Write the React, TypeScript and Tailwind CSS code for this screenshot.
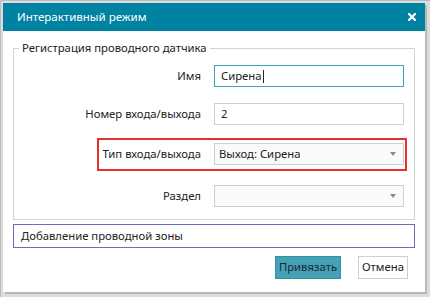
const font = { fontFamily: '"Noto Sans", "Open Sans", sans-serif' };

const Caret = () => (
  <svg width="6" height="4" viewBox="0 0 6 4" className="absolute right-[7px] top-1/2 -translate-y-1/2">
    <path d="M0 0 L6 0 L3 4 Z" fill="#8a8a8a" />
  </svg>
);

function Field({ children, focused }: { children?: React.ReactNode; focused?: boolean }) {
  return (
    <div
      className={`relative w-[190px] h-[22px] bg-white flex items-center px-[6px] text-[11.3px] text-[#222] border ${
        focused ? 'border-[#3fa5bd]' : 'border-[#cfcfcf]'
      }`}
    >
      {children}
    </div>
  );
}

function SelectBox({ value }: { value?: string }) {
  return (
    <div className="relative w-[190px] h-[22px] bg-[#fafafa] flex items-center px-[4px] text-[11.3px] text-[#222] border border-[#cfcfcf]">
      {value}
      <Caret />
    </div>
  );
}

export default function App() {
  return (
    <div className="w-[430px] h-[297px] bg-[#dcdcdc] border-l border-t border-[#bdbdbd] pt-[2px] pl-[2px]" style={font}>
      <div className="w-[422px] h-[289px] bg-white flex flex-col shadow-[2px_2px_0_#b8b8b8]">
        <div className="h-[28px] bg-[#0083a2] flex items-center justify-between pl-[14px] pr-[9px] text-white text-[11.5px]">
          <span>Интерактивный режим</span>
          <svg width="8" height="8" viewBox="0 0 8 8">
            <path d="M1 1 L7 7 M7 1 L1 7" stroke="#fff" strokeWidth="2.2" strokeLinecap="square" />
          </svg>
        </div>

        <div className="flex flex-col px-[10px] pt-[10px]">
          <fieldset className="border border-[#d4d4d4] pr-[10px] pb-[12px] pt-[10px]">
            <legend className="ml-[5px] px-[3px] text-[11.3px] text-[#222] leading-[14px]">
              Регистрация проводного датчика
            </legend>
            <div className="flex flex-col items-end">
              <div className="flex items-center">
                <span className="text-[11.3px] text-[#222]">Имя</span>
                <div className="ml-[13px]">
                  <Field focused>
                    Сирена<span className="ml-[1px] w-px h-[13px] bg-[#222]" />
                  </Field>
                </div>
              </div>
              <div className="flex items-center mt-[16px]">
                <span className="text-[11.3px] text-[#222]">Номер входа/выхода</span>
                <div className="ml-[13px]">
                  <Field>2</Field>
                </div>
              </div>
              <div className="flex items-center mt-[13px] -mr-[3px] border-2 border-[#e8302c] pl-[3px] pr-[1px] pt-[3px] pb-[4px]">
                <span className="text-[11.3px] text-[#222]">Тип входа/выхода</span>
                <div className="ml-[13px]">
                  <SelectBox value="Выход: Сирена" />
                </div>
              </div>
              <div className="flex items-center mt-[14px]">
                <span className="text-[11.3px] text-[#222]">Раздел</span>
                <div className="ml-[13px]">
                  <SelectBox />
                </div>
              </div>
            </div>
          </fieldset>

          <div className="mt-[4px] h-[24px] border border-[#6c6cc4] flex items-center px-[7px] text-[11.3px] text-[#222]">
            Добавление проводной зоны
          </div>

          <div className="flex justify-end gap-[17px] mt-[8px] pr-[7px]">
            <button className="w-[66px] h-[23px] bg-[#45a2b6] border border-[#3590a4] text-[11.3px] text-[#1c2a30]">
              Привязать
            </button>
            <button className="w-[50px] h-[23px] bg-white border border-[#cfcfcf] text-[11.3px] text-[#222]">
              Отмена
            </button>
          </div>
        </div>
      </div>
    </div>
  );
}
